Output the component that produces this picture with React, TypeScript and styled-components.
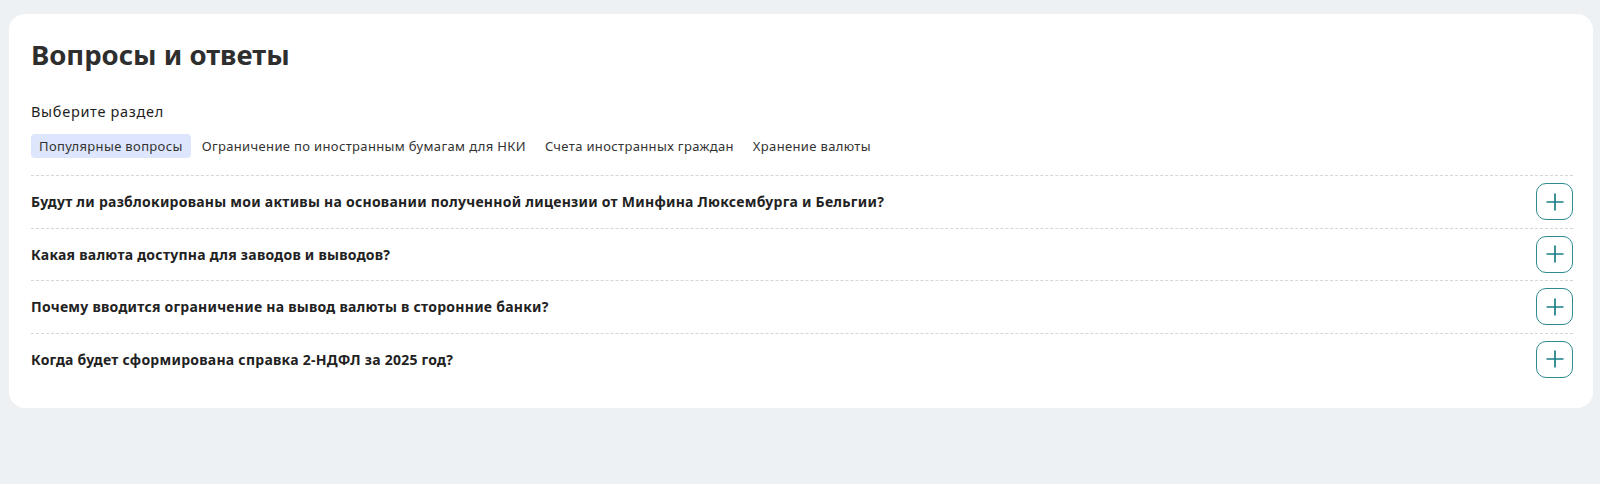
import React from "react";
import styled, { createGlobalStyle } from "styled-components";

const GlobalStyle = createGlobalStyle`
    html, body {
        margin: 0;
        padding: 0;
        background-color: #eef1f3;
        font-family: "Noto Sans", "Liberation Sans", sans-serif;
        color: #2b2b2b;
    }
`;

const TABS = [
    "Популярные вопросы",
    "Ограничение по иностранным бумагам для НКИ",
    "Счета иностранных граждан",
    "Хранение валюты",
];

const QUESTIONS = [
    "Будут ли разблокированы мои активы на основании полученной лицензии от Минфина Люксембурга и Бельгии?",
    "Какая валюта доступна для заводов и выводов?",
    "Почему вводится ограничение на вывод валюты в сторонние банки?",
    "Когда будет сформирована справка 2-НДФЛ за 2025 год?",
];

const PlusIcon = () => (
    <svg width="20" height="20" viewBox="0 0 20 20" fill="none">
        <path d="M10 1.5V18.5M1.5 10H18.5" stroke="#1b7f86" strokeWidth="1.7" />
    </svg>
);

const App = () => {
    return (
        <>
            <GlobalStyle />
            <Page>
                <Card>
                    <Title>Вопросы и ответы</Title>
                    <SectionLabel>Выберите раздел</SectionLabel>
                    <Tabs>
                        {TABS.map((tab, i) => (
                            <Tab key={tab} active={i === 0}>{tab}</Tab>
                        ))}
                    </Tabs>
                    <List>
                        {QUESTIONS.map((q) => (
                            <Row key={q}>
                                <Question>{q}</Question>
                                <ToggleButton aria-label="Открыть">
                                    <PlusIcon />
                                </ToggleButton>
                            </Row>
                        ))}
                    </List>
                </Card>
            </Page>
        </>
    );
};

export default App;

const Page = styled.div`
    padding: 14px 7px 0 9px;
`;

const Card = styled.div`
    background-color: #ffffff;
    border-radius: 16px;
    padding: 23px 20px 23px 22px;
`;

const Title = styled.h1`
    margin: 0;
    font-size: 27.5px;
    line-height: 36px;
    font-weight: 700;
    color: #2e2e2e;
`;

const SectionLabel = styled.div`
    margin-top: 28px;
    font-size: 14.5px;
    letter-spacing: 0.7px;
    line-height: 20px;
    color: #1e1e1e;
`;

const Tabs = styled.div`
    display: flex;
    gap: 2px;
    margin-top: 13px;
    padding-bottom: 17px;
`;

const Tab = styled.button<{ active?: boolean }>`
    border: none;
    border-radius: 4px;
    padding: 0 8px;
    height: 24px;
    font-family: inherit;
    font-size: 13px;
    letter-spacing: 0.35px;
    color: #333;
    background-color: ${(p) => (p.active ? "#dde6fd" : "transparent")};
    cursor: pointer;

    & + & {
        margin-left: 1px;
    }
`;

const List = styled.div`
    display: flex;
    flex-direction: column;
`;

const Row = styled.div`
    display: flex;
    align-items: center;
    justify-content: space-between;
    padding: 7px 0 7.5px;
    border-top: 1px dashed #d4d6d8;
`;

const Question = styled.div`
    font-size: 14px;
    letter-spacing: 0.25px;
    font-weight: 700;
    color: #222;
`;

const ToggleButton = styled.button`
    width: 37px;
    height: 37px;
    display: flex;
    align-items: center;
    justify-content: center;
    padding: 0;
    border: 1px solid #2f8b8f;
    border-radius: 10px;
    background-color: #fff;
    cursor: pointer;
`;
